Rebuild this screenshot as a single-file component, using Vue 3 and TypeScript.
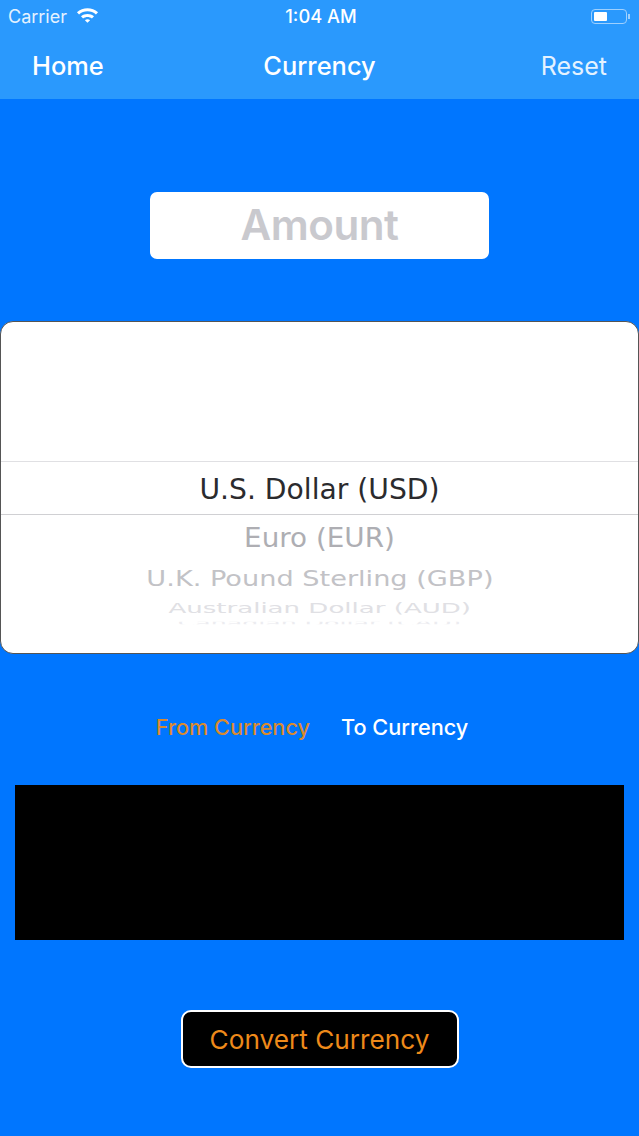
<template>
  <div class="pantalla">
    <header class="cabecera">
      <div class="estado">
        <div class="estado-izq">
          <span>Carrier</span>
          <svg class="wifi" viewBox="0 0 24 17" width="23" height="17">
            <path d="M1 6.2C7 .6 17 .6 23 6.2l-2.2 2.3C16 4.1 8 4.1 3.2 8.5z" fill="#fff" />
            <path d="M5.2 10.4c3.8-3.3 9.8-3.3 13.6 0l-2.2 2.3c-2.6-2.1-6.6-2.1-9.2 0z" fill="#fff" />
            <path d="M9.3 14.4c1.5-1.1 3.9-1.1 5.4 0L12 17z" fill="#fff" />
          </svg>
        </div>
        <span class="hora">1:04 AM</span>
        <div class="estado-der">
          <div class="bateria"><div class="carga"></div></div>
          <div class="polo"></div>
        </div>
      </div>
      <nav class="barra">
        <span class="enlace fuerte">Home</span>
        <span class="titulo">Currency</span>
        <span class="enlace">Reset</span>
      </nav>
    </header>

    <main class="contenido">
      <div class="monto">Amount</div>

      <section class="selector">
        <div class="fila-activa">{{ monedas[0] }}</div>
        <div class="fila f1">{{ monedas[1] }}</div>
        <div class="fila f2">{{ monedas[2] }}</div>
        <div class="fila f3">{{ monedas[3] }}</div>
        <div class="fila f4">{{ monedas[4] }}</div>
      </section>

      <div class="pestanas">
        <span class="desde">From Currency</span>
        <span class="hacia">To Currency</span>
      </div>

      <div class="resultado"></div>

      <button class="convertir">Convert Currency</button>
    </main>
  </div>
</template>

<script setup lang="ts">
const monedas: string[] = [
  'U.S. Dollar (USD)',
  'Euro (EUR)',
  'U.K. Pound Sterling (GBP)',
  'Australian Dollar (AUD)',
  'Canadian Dollar (CAD)',
];
</script>

<style>
html,
body {
  margin: 0;
  background: #0076ff;
}
</style>

<style scoped>
.pantalla {
  width: 639px;
  height: 1136px;
  overflow: hidden;
  background: #0076ff;
  font-family: Inter, "Liberation Sans", sans-serif;
  color: #fff;
}

.cabecera {
  height: 99px;
  background: #2a99fd;
  box-sizing: border-box;
}

.estado {
  height: 32px;
  display: grid;
  grid-template-columns: 1fr auto 1fr;
  align-items: center;
  padding: 0 8px;
  font-size: 18px;
}

.estado-izq {
  display: flex;
  align-items: center;
  gap: 9px;
  color: #e4f2ff;
}

.wifi {
  margin-top: -3px;
}

.hora {
  font-weight: 500;
  font-size: 18.3px;
  margin-left: 3px;
}

.estado-der {
  display: flex;
  align-items: center;
  justify-content: flex-end;
  gap: 1px;
  padding-right: 1px;
}

.bateria {
  width: 36px;
  height: 15px;
  box-sizing: border-box;
  border: 1px solid #9ed0fe;
  border-radius: 4px;
  padding: 2px;
}

.carga {
  width: 13px;
  height: 100%;
  background: #fff;
  border-radius: 1px;
}

.polo {
  width: 2px;
  height: 5px;
  background: #9ed0fe;
}

.barra {
  height: 67px;
  display: grid;
  grid-template-columns: 1fr auto 1fr;
  align-items: center;
  padding: 0 32px 3px;
  font-size: 25.4px;
}

.enlace:last-child {
  justify-self: end;
  font-size: 25px;
  font-weight: 400;
  color: #e4f2ff;
}

.fuerte,
.titulo {
  font-weight: 500;
}

.contenido {
  display: flex;
  flex-direction: column;
  align-items: center;
}

.monto {
  width: 339px;
  height: 67px;
  margin-top: 93px;
  padding-bottom: 2px;
  box-sizing: border-box;
  border-radius: 7px;
  background: #fff;
  color: #c9c9ce;
  font-size: 42.2px;
  font-weight: 600;
  display: flex;
  align-items: center;
  justify-content: center;
  letter-spacing: -0.5px;
}

.selector {
  width: 639px;
  height: 333px;
  margin-top: 62px;
  box-sizing: border-box;
  border: 1px solid #555;
  border-radius: 13px;
  background: #fff;
  padding-top: 139px;
  display: flex;
  flex-direction: column;
  align-items: center;
  font-family: "DejaVu Sans", Verdana, sans-serif;
}

.fila-activa {
  width: 100%;
  height: 54px;
  box-sizing: border-box;
  border-top: 1px solid #e0e0e3;
  border-bottom: 1px solid #d0d0d3;
  padding-top: 2px;
  display: flex;
  align-items: center;
  justify-content: center;
  font-size: 28.2px;
  color: #2b2b2e;
}

.fila {
  white-space: nowrap;
  text-align: center;
}

.f1 {
  margin-top: 7px;
  height: 34px;
  line-height: 34px;
  font-size: 27.8px;
  color: #aeaeb3;
  transform: scaleY(0.93);
}

.f2 {
  margin-top: 8px;
  height: 30px;
  line-height: 30px;
  font-size: 28px;
  color: #c2c2c6;
  transform: scaleX(0.97) scaleY(0.76);
}

.f3 {
  height: 26px;
  line-height: 26px;
  font-size: 28px;
  color: #e0e0e4;
  margin-top: 1px;
  transform: scaleX(0.93) scaleY(0.5);
}

.f4 {
  height: 8px;
  line-height: 8px;
  font-size: 28px;
  color: #ececf0;
  margin-top: -2px;
  overflow: hidden;
  transform: scaleX(0.9) scaleY(0.3);
}

.pestanas {
  display: flex;
  gap: 31px;
  margin-top: 58px;
  margin-right: 15px;
  height: 31px;
  line-height: 30px;
  font-size: 21.7px;
  font-weight: 500;
}

.desde {
  color: #d98a2e;
}

.hacia {
  color: #fff;
}

.resultado {
  width: 609px;
  height: 155px;
  margin-top: 42px;
  background: #000;
}

.convertir {
  width: 278px;
  height: 58px;
  margin-top: 70px;
  box-sizing: border-box;
  border: 2px solid #fff;
  border-radius: 10px;
  background: #000;
  color: #ee8a1a;
  font-family: Inter, "Liberation Sans", sans-serif;
  font-size: 26.2px;
  padding: 0;
}
</style>
